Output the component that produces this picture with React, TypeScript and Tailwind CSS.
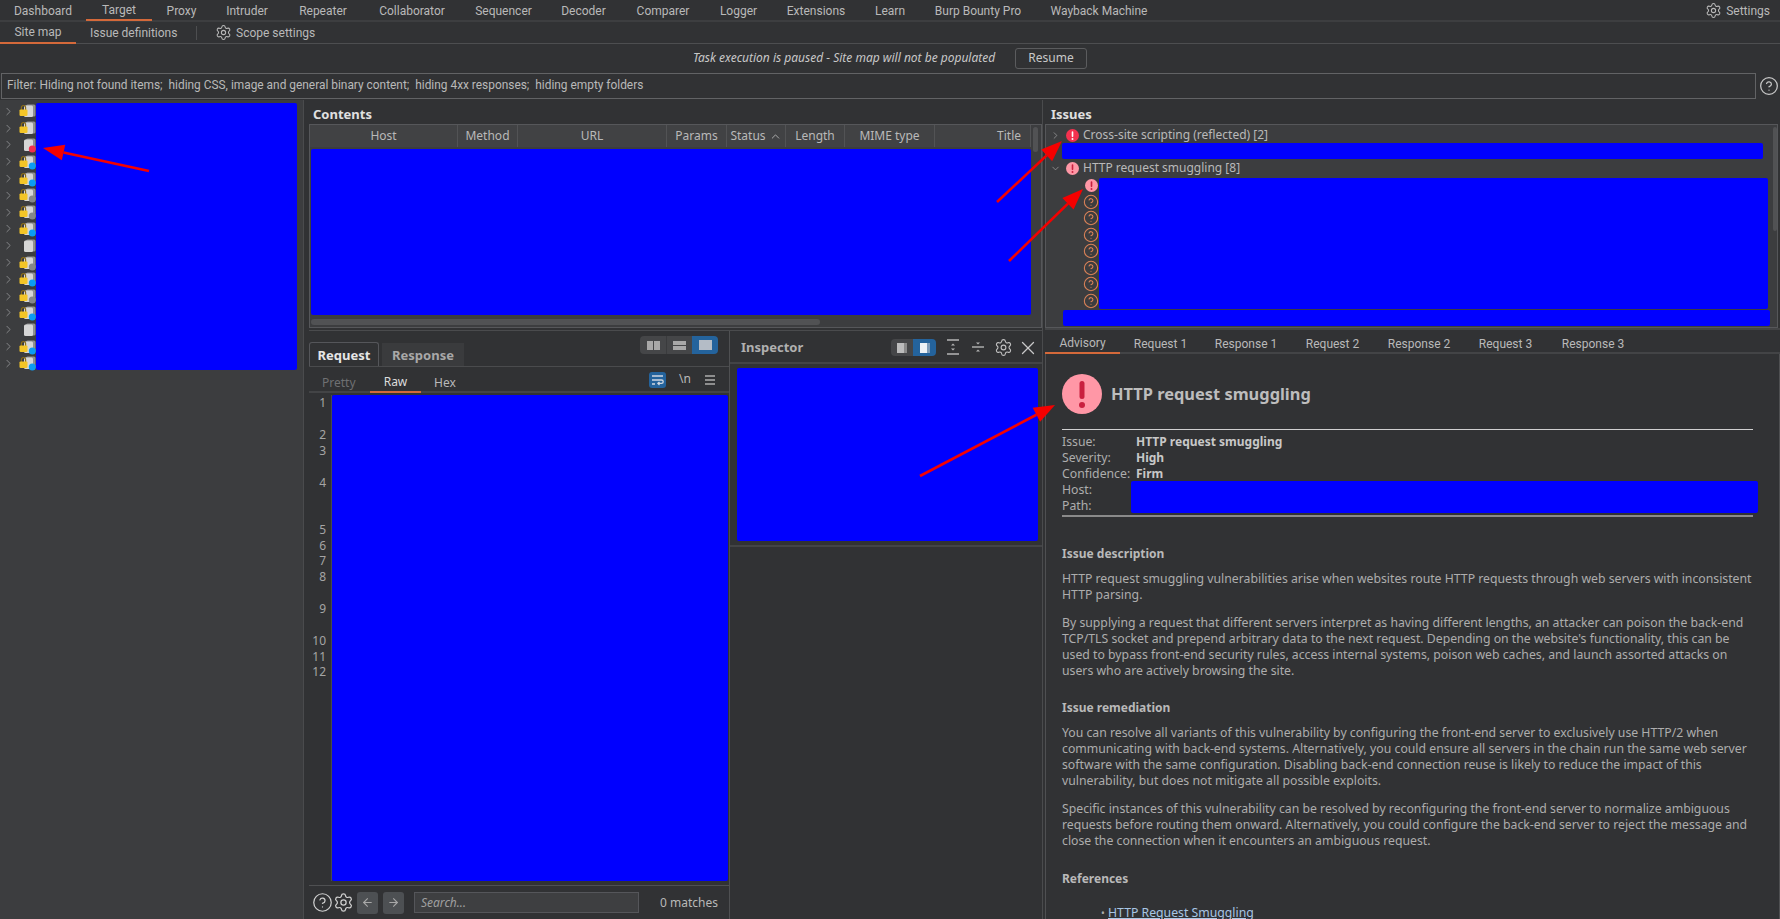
import React from "react";
import { ChevronRight, ChevronDown, ChevronUp, Settings, CircleHelp, X, ArrowLeft, ArrowRight } from "lucide-react";

const navTabs: [string, string, boolean][] = [
  ["Dashboard", "w-[86px]", false],
  ["Target", "w-[66px]", true],
  ["Proxy", "w-[59px]", false],
  ["Intruder", "w-[72px]", false],
  ["Repeater", "w-[80px]", false],
  ["Collaborator", "w-[98px]", false],
  ["Sequencer", "w-[85px]", false],
  ["Decoder", "w-[75px]", false],
  ["Comparer", "w-[84px]", false],
  ["Logger", "w-[67px]", false],
  ["Extensions", "w-[88px]", false],
  ["Learn", "w-[60px]", false],
  ["Burp Bounty Pro", "w-[116px]", false],
  ["Wayback Machine", "w-[126px]", false],
];

const columns: [string, string, string][] = [
  ["Host", "w-[148px]", "justify-center"],
  ["Method", "w-[60px]", "justify-center"],
  ["URL", "w-[149px]", "justify-center"],
  ["Params", "w-[60px]", "justify-center"],
  ["Status", "w-[59px]", "justify-center"],
  ["Length", "w-[59px]", "justify-center"],
  ["MIME type", "w-[90px]", "justify-center"],
  ["Title", "w-[96px]", "justify-end pr-[9px]"],
];

const treeRows: [boolean, string | null][] = [
  [true, null],
  [true, null],
  [false, "#f0304f"],
  [true, "#0b9bf3"],
  [true, "#0b9bf3"],
  [true, "#85878a"],
  [true, "#85878a"],
  [true, "#0b9bf3"],
  [false, null],
  [true, "#85878a"],
  [true, "#0b9bf3"],
  [true, "#85878a"],
  [true, "#0b9bf3"],
  [false, null],
  [true, "#0b9bf3"],
  [true, "#0b9bf3"],
];

function TreeIcon({ lock, dot }: { lock: boolean; dot: string | null }) {
  return (
    <svg width="17" height="16" viewBox="0 0 17 16" className="shrink-0">
      <rect x="7" y="1.5" width="9.5" height="12" rx="1.5" fill="#8f9092" />
      <rect x="5" y="2.5" width="9" height="11.5" rx="1.5" fill="#d6d6d6" />
      {lock && (
        <>
          <path d="M2.4 7V4.6a2.1 2.1 0 0 1 4.2 0V7" fill="none" stroke="#8c6d16" strokeWidth="1.2" />
          <rect x="0.5" y="6.4" width="8" height="6.6" rx="1.2" fill="#f3c527" />
        </>
      )}
      {dot && <circle cx="13.3" cy="12" r="3.5" fill={dot} />}
    </svg>
  );
}

function Bang({ size, bg, fg }: { size: number; bg: string; fg: string }) {
  return (
    <svg width={size} height={size} viewBox="0 0 40 40" className="shrink-0">
      <circle cx="20" cy="20" r="20" fill={bg} />
      <rect x="17.5" y="7" width="5" height="18" rx="2.5" fill={fg} />
      <circle cx="20" cy="31" r="3" fill={fg} />
    </svg>
  );
}

function OrangeQ() {
  return (
    <div className="h-[16.7px] flex items-center justify-center">
      <CircleHelp size={16} strokeWidth={1.6} className="text-[#da8258]" />
    </div>
  );
}

function Arrow({ x1, y1, x2, y2 }: { x1: number; y1: number; x2: number; y2: number }) {
  const dx = x2 - x1;
  const dy = y2 - y1;
  const len = Math.hypot(dx, dy);
  const ux = dx / len;
  const uy = dy / len;
  const bx = x2 - ux * 21;
  const by = y2 - uy * 21;
  const pts = `${x2},${y2} ${bx - uy * 8},${by + ux * 8} ${bx + uy * 8},${by - ux * 8}`;
  return (
    <>
      <line x1={x1} y1={y1} x2={bx} y2={by} stroke="#f50000" strokeWidth="2.6" />
      <polygon points={pts} fill="#f50000" />
    </>
  );
}

function Blue({ className }: { className: string }) {
  return <div className={`bg-[#0000ff] rounded-[2px] ${className}`} />;
}

function Line({ children }: { children: React.ReactNode }) {
  return <div className="h-[16px] leading-[16px] whitespace-nowrap">{children}</div>;
}

function Heading({ children, className }: { children: React.ReactNode; className: string }) {
  return <div className={`h-[16px] leading-[16px] font-bold text-[12px] whitespace-nowrap text-[#b9b9b9] ${className}`}>{children}</div>;
}

const advisoryTabs: [string, string, boolean][] = [
  ["Advisory", "w-[75px]", true],
  ["Request 1", "w-[81px]", false],
  ["Response 1", "w-[90px]", false],
  ["Request 2", "w-[83px]", false],
  ["Response 2", "w-[90px]", false],
  ["Request 3", "w-[83px]", false],
  ["Response 3", "w-[92px]", false],
];

const lineNumbers: [string, string][] = [
  ["1", "h-[32px]"],
  ["2", "h-[16px]"],
  ["3", "h-[32px]"],
  ["4", "h-[47px]"],
  ["5", "h-[16px]"],
  ["6", "h-[15px]"],
  ["7", "h-[16px]"],
  ["8", "h-[32px]"],
  ["9", "h-[32px]"],
  ["10", "h-[16px]"],
  ["11", "h-[15px]"],
  ["12", "h-[16px]"],
];

export default function App() {
  return (
    <div className="relative w-[1780px] h-[919px] overflow-hidden flex flex-col bg-[#313234] text-[#b9b9b9] text-[12px] font-['Noto_Sans',sans-serif]">
      {/* Primary nav */}
      <div className="h-[22px] shrink-0 flex border-b-2 border-[#3d3e40] font-['Roboto',sans-serif]">
        {navTabs.map(([label, w, active]) => (
          <div key={label} className={`${w} h-[21px] shrink-0 flex items-center justify-center ${active ? "border-b-2 border-[#d4693a]" : ""}`}>
            {label}
          </div>
        ))}
        <div className="ml-auto flex items-center gap-[4px] pr-[10px] h-[21px]">
          <Settings size={17} strokeWidth={1.5} />
          <span>Settings</span>
        </div>
      </div>
      {/* Secondary nav */}
      <div className="h-[22px] shrink-0 flex items-center border-b border-[#4d4e50] font-['Roboto',sans-serif]">
        <div className="w-[76px] h-[22px] flex items-center justify-center border-b-2 border-[#d4693a]">Site map</div>
        <div className="pl-[14px] w-[120px]">Issue definitions</div>
        <div className="w-px h-[14px] bg-[#4d4e50]" />
        <div className="ml-[18px] flex items-center gap-[4px]">
          <Settings size={17} strokeWidth={1.5} />
          <span>Scope settings</span>
        </div>
      </div>
      {/* Banner */}
      <div className="h-[28px] shrink-0 flex items-center pl-[693px] gap-[18px]">
        <span className="italic text-[#c8c8c8] w-[304px] whitespace-nowrap">Task execution is paused - Site map will not be populated</span>
        <div className="w-[72px] h-[21px] flex items-center justify-center rounded-[3px] border border-[#5b5c5e] text-[#c8c8c8]">Resume</div>
      </div>
      {/* Filter */}
      <div className="h-[27px] shrink-0 flex items-center">
        <div className="ml-[1px] w-[1755px] h-[26px] flex items-center pl-[5px] border border-[#626365] whitespace-pre font-['Roboto',sans-serif] text-[11.9px]">
          Filter: Hiding not found items;  hiding CSS, image and general binary content;  hiding 4xx responses;  hiding empty folders
        </div>
        <CircleHelp size={20} strokeWidth={1.5} className="ml-[3px] text-[#c8c8c8]" />
      </div>
      {/* Main */}
      <div className="flex-1 flex min-h-0 pt-[1px]">
        {/* Tree */}
        <div className="w-[303px] shrink-0 bg-[#3c3d3f] flex items-start pt-[3px]">
          <div className="w-[36px] shrink-0 flex flex-col">
            {treeRows.map(([lock, dot], i) => (
              <div key={i} className="h-[16.8px] flex items-center">
                <ChevronRight size={13} strokeWidth={1.6} className="ml-[2px] mr-[4px] text-[#8f9092]" />
                <TreeIcon lock={lock} dot={dot} />
              </div>
            ))}
          </div>
          <Blue className="w-[261px] h-[267px]" />
        </div>
        <div className="w-[6px] shrink-0 border-l border-[#4a4b4d]" />
        {/* Middle */}
        <div className="w-[733px] shrink-0 flex flex-col">
          <div className="h-[24px] shrink-0 flex items-center pl-[4px] pt-[6px] font-bold text-[13px] text-[#e0e0e0]">Contents</div>
          <div className="h-[204px] shrink-0 border border-[#56575a] bg-[#3c3d3f] flex">
            <div className="w-[721px] shrink-0 flex flex-col">
              <div className="h-[22px] shrink-0 flex bg-[#414244]">
                {columns.map(([label, w, j]) => (
                  <div key={label} className={`${w} shrink-0 flex items-center gap-[3px] border-r border-[#525355] ${j}`}>
                    {label}
                    {label === "Status" && <ChevronUp size={13} strokeWidth={1.6} />}
                  </div>
                ))}
              </div>
              <Blue className="ml-[1px] mt-[2px] w-[720px] h-[166px] shrink-0" />
              <div className="ml-[1px] mt-[4px] w-[509px] h-[6px] rounded-[3px] bg-[#515254]" />
            </div>
            <div className="ml-[2px] mt-[2px] w-[5px] h-[25px] rounded-[3px] bg-[#515254]" />
          </div>
          <div className="h-[3px] shrink-0 border-b border-[#4a4b4d]" />
          <div className="flex-1 flex min-h-0">
            {/* Request pane */}
            <div className="w-[421px] shrink-0 flex flex-col border-r border-[#4f5052]">
              <div className="h-[36px] shrink-0 relative flex items-end border-b border-[#4a4b4d]">
                <div className="w-[70px] h-[24px] pt-[2px] flex items-center justify-center font-bold text-[13px] text-[#e6e6e6] border border-b-0 border-[#55565a] rounded-t-[3px]">Request</div>
                <div className="ml-[3px] w-[82px] h-[23px] pt-[2px] flex items-center justify-center font-bold text-[13px] text-[#a8a8a8] bg-[#3a3b3d]">Response</div>
                <div className="absolute left-[331px] top-[5px] w-[78px] h-[18px] flex rounded-[4px] overflow-hidden">
                  <div className="w-[26px] bg-[#454648] flex items-center justify-center gap-[1px]">
                    <div className="w-[6px] h-[9px] bg-[#a8a8a8]" />
                    <div className="w-[6px] h-[9px] bg-[#a8a8a8]" />
                  </div>
                  <div className="w-[26px] bg-[#454648] flex flex-col items-center justify-center gap-[1px] border-l border-[#3a3b3d]">
                    <div className="w-[13px] h-[4px] bg-[#a8a8a8]" />
                    <div className="w-[13px] h-[4px] bg-[#a8a8a8]" />
                  </div>
                  <div className="w-[26px] bg-[#24639c] flex items-center justify-center">
                    <div className="w-[13px] h-[10px] bg-[#b4bcc6]" />
                  </div>
                </div>
              </div>
              <div className="h-[26px] shrink-0 flex items-center border-b-2 border-[#434446] relative">
                <div className="w-[61px] pl-[13px] pt-[7px] text-[#6f7072]">Pretty</div>
                <div className="w-[51px] h-[26px] pt-[5px] flex items-center justify-center border-b-2 border-[#d4693a] text-[#dcdcdc] mt-[2px]">Raw</div>
                <div className="w-[48px] pt-[7px] flex justify-center">Hex</div>
                <div className="absolute left-[340px] top-[5px] w-[17px] h-[16px] rounded-[3px] bg-[#24639c] flex items-center justify-center">
                  <svg width="13" height="12" viewBox="0 0 13 12" fill="none" stroke="#cfd8e2" strokeWidth="1.3">
                    <path d="M1 2h11M1 6h9.5a1.6 1.6 0 0 1 0 3.4H7M8.5 8l-1.6 1.4L8.5 11M1 10h3" />
                  </svg>
                </div>
                <div className="absolute left-[370px] top-[3px] text-[12px]">\n</div>
                <div className="absolute left-[396px] top-[8px] flex flex-col gap-[2px]">
                  <div className="w-[10px] h-[2px] bg-[#8e8e8e]" />
                  <div className="w-[10px] h-[2px] bg-[#8e8e8e]" />
                  <div className="w-[10px] h-[2px] bg-[#8e8e8e]" />
                </div>
              </div>
              <div className="flex-1 flex min-h-0 pt-[2px]">
                <div className="w-[23px] shrink-0 border-r border-[#48494b] text-[#a5a5a5] text-[12px]">
                  {lineNumbers.map(([n, h]) => (
                    <div key={n} className={`${h} leading-[16px] text-right pr-[5px]`}>{n}</div>
                  ))}
                </div>
                <Blue className="w-[396px] h-[486px]" />
              </div>
              <div className="h-[34px] shrink-0 mt-[4px] flex items-center border-t border-[#4f5052] pl-[3px]">
                <CircleHelp size={21} strokeWidth={1.4} className="text-[#d0d0d0] shrink-0" />
                <Settings size={21} strokeWidth={1.4} className="text-[#d0d0d0] shrink-0" />
                <div className="ml-[3px] w-[21px] h-[22px] rounded-[3px] bg-[#4d5053] flex items-center justify-center"><ArrowLeft size={13} className="text-[#a8a8a8]" /></div>
                <div className="ml-[5px] w-[21px] h-[22px] rounded-[3px] bg-[#4d5053] flex items-center justify-center"><ArrowRight size={13} className="text-[#a8a8a8]" /></div>
                <div className="ml-[10px] w-[225px] h-[21px] flex items-center pl-[6px] italic bg-[#3e3f41] border border-[#55565a] text-[#a0a0a0]">Search...</div>
                <div className="ml-[21px] whitespace-nowrap">0 matches</div>
              </div>
            </div>
            {/* Inspector */}
            <div className="flex-1 flex flex-col min-w-0">
              <div className="h-[33px] shrink-0 flex items-center border-b-2 border-[#434446] pl-[11px] pt-[3px] relative">
                <span className="font-bold text-[13px] text-[#b0b0b0]">Inspector</span>
                <div className="absolute left-[161px] top-[8px] w-[45px] h-[17px] flex rounded-[4px] overflow-hidden">
                  <div className="w-[22px] bg-[#454648] flex items-center justify-center"><div className="w-[10px] h-[10px] bg-[#bcbcbc] border-r-[3px] border-[#8a8a8a]" /></div>
                  <div className="w-[23px] bg-[#24639c] flex items-center justify-center"><div className="w-[10px] h-[10px] bg-[#eef2f6] border-r-[3px] border-[#7f9cb8]" /></div>
                </div>
                <svg width="14" height="16" viewBox="0 0 14 16" className="absolute left-[216px] top-[8px] text-[#b5b5b5]" fill="none" stroke="currentColor" strokeWidth="1.4">
                  <path d="M1 1h12M1 15h12" strokeWidth="1.6" />
                  <path d="M7 4.5l-2 2h4zM7 11.5l-2-2h4z" fill="currentColor" stroke="none" />
                </svg>
                <svg width="14" height="16" viewBox="0 0 14 16" className="absolute left-[241px] top-[8px] text-[#b5b5b5]" fill="none" stroke="currentColor" strokeWidth="1.4">
                  <path d="M1 8h12" />
                  <path d="M7 5.5l-2-2h4zM7 10.5l-2 2h4z" fill="currentColor" stroke="none" />
                </svg>
                <Settings size={19} strokeWidth={1.4} className="absolute left-[264px] top-[7px] text-[#c0c0c0]" />
                <X size={22} strokeWidth={1.4} className="absolute left-[287px] top-[6px] text-[#c8c8c8]" />
              </div>
              <div className="pt-[4px] pl-[7px] pb-[4px] border-b-2 border-[#434446]">
                <Blue className="w-[301px] h-[173px]" />
              </div>
            </div>
          </div>
        </div>
        <div className="w-[3px] shrink-0 border-l border-[#4a4b4d]" />
        {/* Right */}
        <div className="flex-1 flex flex-col min-w-0">
          <div className="h-[24px] shrink-0 flex items-center pl-[6px] pt-[6px] font-bold text-[13px] text-[#e0e0e0]">Issues</div>
          <div className="h-[204px] shrink-0 mr-[2px] border border-[#56575a] bg-[#3c3d3f] flex">
            <div className="w-[726px] shrink-0 flex flex-col">
              <div className="h-[18px] shrink-0 flex items-center pt-[2px]">
                <ChevronRight size={11} strokeWidth={1.6} className="ml-[4px] mr-[5px] text-[#a0a0a0]" />
                <Bang size={13} bg="#f5314f" fg="#ffffff" />
                <span className="ml-[4px]">Cross-site scripting (reflected) [2]</span>
              </div>
              <Blue className="ml-[16px] w-[701px] h-[16px] shrink-0" />
              <div className="h-[18px] shrink-0 flex items-center">
                <ChevronDown size={11} strokeWidth={1.6} className="ml-[4px] mr-[5px] text-[#a0a0a0]" />
                <Bang size={13} bg="#ff97a6" fg="#c9203f" />
                <span className="ml-[4px]">HTTP request smuggling [8]</span>
              </div>
              <div className="h-[132px] shrink-0 flex pl-[37px]">
                <div className="w-[16px] shrink-0 flex flex-col">
                  <div className="h-[16.7px] flex items-center justify-center"><Bang size={13} bg="#ff97a6" fg="#c9203f" /></div>
                  {Array.from({ length: 7 }).map((_, i) => <OrangeQ key={i} />)}
                </div>
                <Blue className="mt-[1px] w-[669px] h-[131px]" />
              </div>
              <Blue className="ml-[17px] mt-[1px] w-[707px] h-[16px] shrink-0" />
            </div>
            <div className="ml-[1px] mt-[2px] w-[5px] h-[104px] rounded-[3px] bg-[#515254]" />
          </div>
          <div className="h-[26px] shrink-0 flex border-t-2 border-b-2 border-[#434446] font-['Roboto',sans-serif]">
            {advisoryTabs.map(([label, w, active]) => (
              <div key={label} className={`${w} h-[24px] pt-[3px] shrink-0 flex items-center justify-center ${active ? "border-b-2 border-[#d4693a]" : ""}`}>{label}</div>
            ))}
          </div>
          <div className="flex-1 min-h-0 border-l border-[#4f5052] border-r overflow-hidden pl-[16px] text-[#adadad] text-[12.25px]">
            <div className="h-[75px] flex items-center pt-[6px] pb-[1px]">
              <Bang size={40} bg="#ff97a6" fg="#c9203f" />
              <span className="ml-[9px] font-bold text-[16.4px] text-[#bdbdbd] whitespace-nowrap">HTTP request smuggling</span>
            </div>
            <div className="w-[691px] h-[1px] bg-[#d0d0d0]" />
            <div className="relative pt-[4px]">
              <div className="flex">
                <div className="w-[74px]">
                  <Line>Issue:</Line>
                  <Line>Severity:</Line>
                  <Line>Confidence:</Line>
                  <Line>Host:</Line>
                  <Line>Path:</Line>
                </div>
                <div className="font-bold text-[#c8c8c8] text-[12px]">
                  <Line>HTTP request smuggling</Line>
                  <Line>High</Line>
                  <Line>Firm</Line>
                </div>
              </div>
              <Blue className="absolute left-[69px] top-[51px] w-[627px] h-[32px]" />
            </div>
            <div className="mt-[1px] w-[691px] h-[2px] bg-[#8a8a8a]" />
            <Heading className="mt-[29px]">Issue description</Heading>
            <div className="mt-[9px]">
              <Line>HTTP request smuggling vulnerabilities arise when websites route HTTP requests through web servers with inconsistent</Line>
              <Line>HTTP parsing.</Line>
            </div>
            <div className="mt-[12px]">
              <Line>By supplying a request that different servers interpret as having different lengths, an attacker can poison the back-end</Line>
              <Line>TCP/TLS socket and prepend arbitrary data to the next request. Depending on the website's functionality, this can be</Line>
              <Line>used to bypass front-end security rules, access internal systems, poison web caches, and launch assorted attacks on</Line>
              <Line>users who are actively browsing the site.</Line>
            </div>
            <Heading className="mt-[21px]">Issue remediation</Heading>
            <div className="mt-[9px]">
              <Line>You can resolve all variants of this vulnerability by configuring the front-end server to exclusively use HTTP/2 when</Line>
              <Line>communicating with back-end systems. Alternatively, you could ensure all servers in the chain run the same web server</Line>
              <Line>software with the same configuration. Disabling back-end connection reuse is likely to reduce the impact of this</Line>
              <Line>vulnerability, but does not mitigate all possible exploits.</Line>
            </div>
            <div className="mt-[12px]">
              <Line>Specific instances of this vulnerability can be resolved by reconfiguring the front-end server to normalize ambiguous</Line>
              <Line>requests before routing them onward. Alternatively, you could configure the back-end server to reject the message and</Line>
              <Line>close the connection when it encounters an ambiguous request.</Line>
            </div>
            <Heading className="mt-[22px]">References</Heading>
            <div className="mt-[18px] pl-[39px] flex items-center h-[16px] whitespace-nowrap">
              <span className="w-[7px] text-[10px]">•</span>
              <span className="underline text-[#a8c6e4]">HTTP Request Smuggling</span>
            </div>
          </div>
        </div>
      </div>
      {/* Annotation arrows */}
      <svg className="absolute inset-0 pointer-events-none" width="1780" height="919">
        <Arrow x1={149} y1={171} x2={43} y2={148} />
        <Arrow x1={997} y1={202} x2={1062} y2={141} />
        <Arrow x1={1009} y1={261} x2={1083} y2={189} />
        <Arrow x1={920} y1={476} x2={1055} y2={405} />
      </svg>
    </div>
  );
}
